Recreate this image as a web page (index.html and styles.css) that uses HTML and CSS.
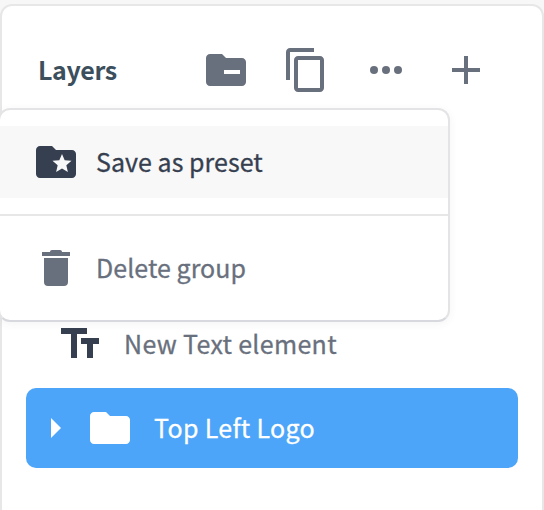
FILE: index.html
```html
<!DOCTYPE html>
<html lang="en">
<head>
    <meta charset="UTF-8">
    <meta name="viewport" content="width=device-width, initial-scale=1.0">
    <title>Layers</title>
    <link rel="stylesheet" href="styles.css">
</head>
<body>
    <div class="panel">
        <div class="header">
            <h1 class="title">Layers</h1>
            <div class="actions">
                <svg class="icon" viewBox="0 0 24 24"><path fill-rule="evenodd" d="M10 4H4c-1.11 0-2 .89-2 2v12c0 1.1.89 2 2 2h16c1.1 0 2-.9 2-2V8c0-1.11-.9-2-2-2h-8l-2-2zM11 12h8v2h-8z"/></svg>
                <svg class="icon" viewBox="0 0 24 24"><path d="M16 1H4c-1.1 0-2 .9-2 2v14h2V3h12V1zm3 4H8c-1.1 0-2 .9-2 2v14c0 1.1.9 2 2 2h11c1.1 0 2-.9 2-2V7c0-1.1-.9-2-2-2zm0 16H8V7h11v14z"/></svg>
                <svg class="icon" viewBox="0 0 24 24"><circle cx="6" cy="12" r="2"/><circle cx="12" cy="12" r="2"/><circle cx="18" cy="12" r="2"/></svg>
                <svg class="icon" viewBox="0 0 24 24"><path d="M19 13h-6v6h-2v-6H5v-2h6V5h2v6h6z"/></svg>
            </div>
            <div class="menu">
                <div class="menu-item active">
                    <svg class="icon" viewBox="0 0 24 24"><path fill-rule="evenodd" d="M20 6h-8l-2-2H4c-1.1 0-2 .9-2 2v12c0 1.1.9 2 2 2h16c1.1 0 2-.9 2-2V8c0-1.1-.9-2-2-2zm-2.060 11L15 15.280 12.060 17l.78-3.330-2.590-2.240 3.410-.29L15 8l1.340 3.140 3.410.29-2.590 2.240.78 3.330z"/></svg>
                    <span class="label">Save as preset</span>
                </div>
                <div class="divider"></div>
                <div class="menu-item">
                    <svg class="icon" viewBox="0 0 24 24"><path d="M19 4h-4c0-.6-.4-1-1-1h-4c-.6 0-1 .4-1 1H5v2h14zM6 7v12c0 1.3.7 2 2 2h8c1.3 0 2-.7 2-2V7z"/></svg>
                    <span class="label">Delete group</span>
                </div>
            </div>
        </div>
        <div class="layers">
            <div class="layer">
                <svg class="icon text-icon" viewBox="0 0 48 48"><path d="M5 8h26v6h-10v24h-6V14H5zM25 18h18v6h-6v14h-6V24h-6z"/></svg>
                <span class="label">New Text element</span>
            </div>
            <div class="layer selected">
                <svg class="arrow" viewBox="0 0 10 20"><path d="M0 0l10 10L0 20z"/></svg>
                <svg class="icon" viewBox="0 0 24 24"><path d="M10 4H4c-1.1 0-2 .9-2 2v12c0 1.1.9 2 2 2h16c1.1 0 2-.9 2-2V8c0-1.1-.9-2-2-2h-8l-2-2z"/></svg>
                <span class="label">Top Left Logo</span>
            </div>
        </div>
    </div>
</body>
</html>
```
FILE: styles.css
```css
* {
    box-sizing: border-box;
}
body {
    margin: 0;
    padding-top: 4px;
    height: 510px;
    overflow: hidden;
    background: #f7f7f7;
    color: #69707d;
    font-family: "Noto Sans CJK SC", "Noto Sans", sans-serif;
    font-size: 25px;
    line-height: 36px;
}
.panel {
    height: 530px;
    background: #fff;
    border: 2px solid #e7e7e7;
    border-radius: 12px;
}
.header {
    position: relative;
    display: flex;
    justify-content: space-between;
    align-items: center;
    height: 128px;
    padding: 0 52px 0 36px;
}
.title {
    margin: 0;
    padding-bottom: 2px;
    color: #3c4f5c;
    font-size: 25px;
    font-weight: 700;
    letter-spacing: -0.35px;
}
.label {
    padding-bottom: 2px;
    letter-spacing: 0.04px;
    -webkit-text-stroke: 0.3px currentColor;
}
.actions {
    display: flex;
    gap: 32px;
}
.icon {
    flex: none;
    width: 48px;
    height: 48px;
    fill: currentColor;
}
.menu {
    position: absolute;
    top: 102px;
    left: -4px;
    z-index: 1;
    width: 452px;
    padding: 16px 0;
    background: #fff;
    border: 2px solid #e4e4e6;
    border-bottom-color: #d8d9df;
    border-radius: 12px;
    box-shadow: 0 2px 8px rgba(60, 70, 90, 0.06);
}
.menu-item {
    display: flex;
    align-items: center;
    gap: 16px;
    height: 72px;
    padding: 0 32px;
}
.active {
    background: #f8f8f8;
    color: #363f50;
}
.divider {
    height: 2px;
    margin: 16px 0;
    background: #e7e7e7;
}
.layers {
    display: flex;
    flex-direction: column;
    gap: 4px;
    padding: 170px 24px 0;
}
.layer {
    display: flex;
    align-items: center;
    height: 80px;
    padding-left: 30px;
    border-radius: 10px;
}
.layer .label {
    letter-spacing: 0.32px;
}
.text-icon {
    margin-right: 20px;
    color: #363f50;
}
.selected {
    gap: 20px;
    padding-left: 25px;
    background: #4ca5f8;
    color: #fff;
}
.arrow {
    width: 10px;
    height: 20px;
    margin-right: 5px;
    fill: #fff;
}
```
